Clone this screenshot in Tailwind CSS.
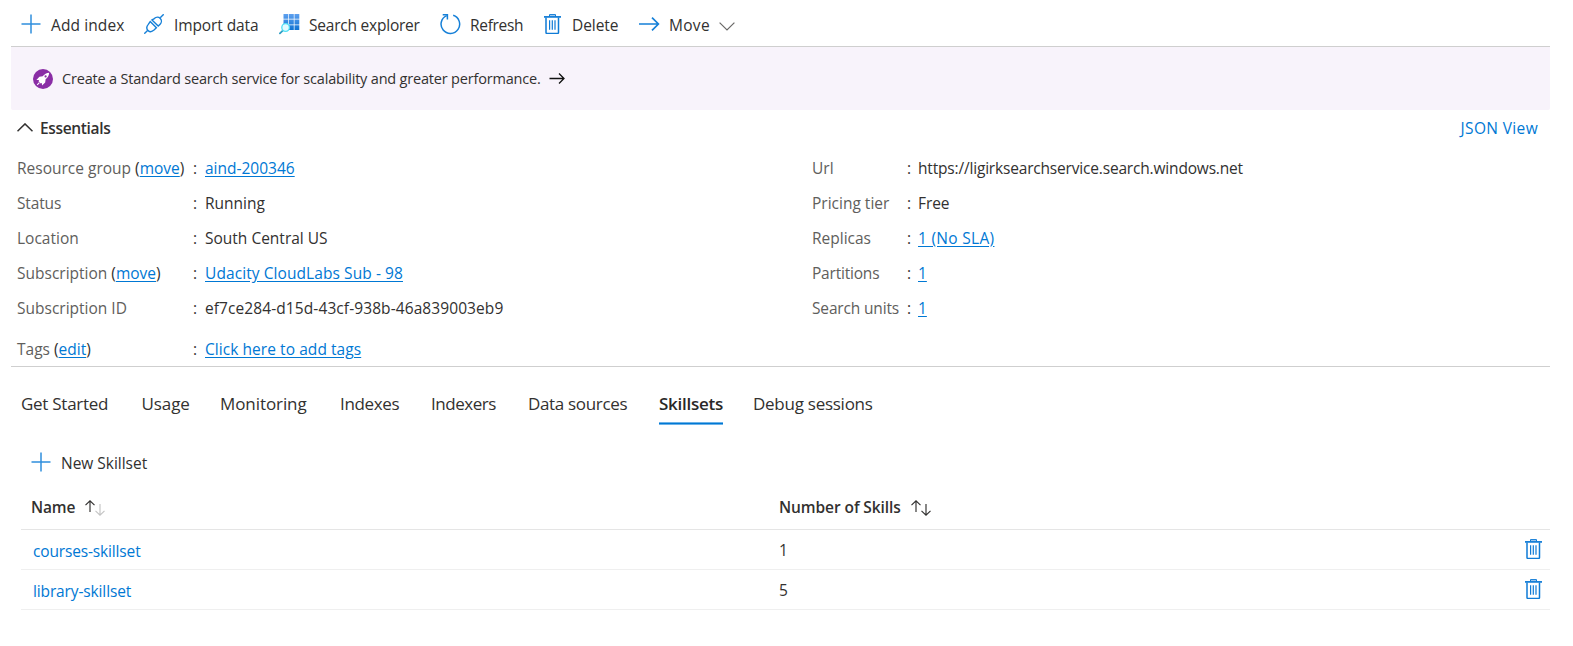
<!DOCTYPE html>
<html lang="en">
<head>
<meta charset="utf-8">
<title>Search service</title>
<script src="https://cdn.jsdelivr.net/npm/@tailwindcss/browser@4"></script>
</head>
<body class="bg-white">
<svg width="0" height="0" class="hidden">
  <symbol id="plus" viewBox="0 0 20 20"><path d="M10 .5v19M.5 10h19" fill="none" stroke="#2f8fdd" stroke-width="1.5"/></symbol>
  <symbol id="trash" viewBox="0 0 17 20"><g fill="none" stroke="#0f7bd6"><path d="M5.5 2.5V.6h6v1.9" fill="#a9cdef" stroke-width="1"/><path d="M0 2.9h17" stroke-width="1.7"/><path d="M2 3.5v15q0 .9.9.9h10.7q.9 0 .9-.9v-15" stroke-width="1.5"/><path d="M5.6 6.2v9.6M8.3 6.2v9.6M11 6.2v9.6" stroke-width="1.2"/></g></symbol>
  <symbol id="up" viewBox="0 0 10 12"><path d="M5 12V.8M.5 5.2 5 .8l4.500 4.400" fill="none" stroke="currentColor" stroke-width="1.150"/></symbol>
  <symbol id="down" viewBox="0 0 10 12"><path d="M5 0v11.200M.5 6.800 5 11.200l4.500-4.400" fill="none" stroke="currentColor" stroke-width="1.150"/></symbol>
</svg>
<div class="flex h-[646px] w-[1573px] flex-col overflow-hidden pl-[11px] pr-[23px] font-['Open_Sans',sans-serif] text-[15.5px] text-[#323130] whitespace-nowrap">

  <!-- Command bar -->
  <div class="flex h-[47px] shrink-0 items-center border-b border-[#cfcfcf] pt-[5px] pl-[10px]">
    <div class="flex w-[123px] items-center gap-[10px]">
      <svg class="mb-[3px] size-5"><use href="#plus"/></svg><span class="tracking-[0.1px]">Add index</span>
    </div>
    <div class="flex w-[135px] items-center gap-[10px]">
      <svg class="mb-[3px] size-5" viewBox="0 0 20 20" fill="none" stroke="#1680d8" stroke-width="1.400"><path d="M.3 19.700 3.800 16.200M16.200 3.800 19.700.3"/><path d="m6.200 7.600 6.200 6.200-2.400 2.300c-2 1.800-4.500 1.900-6 .3s-1.500-4 .3-6z"/><path d="m8 6 6.200 6.100 1.700-1.700c1.900-1.900 1.900-4.500.4-6s-4.200-1.600-6 .2z"/></svg><span class="tracking-[-0.1px]">Import data</span>
    </div>
    <div class="flex w-[161px] items-center gap-[9px]">
      <svg class="mb-[3px] size-[21px]" viewBox="0 0 21 21">
        <defs><linearGradient id="g" x1="0" y1="0" x2="0" y2="16" gradientUnits="userSpaceOnUse"><stop offset="0" stop-color="#5ea0ef"/><stop offset="1" stop-color="#0f73d2"/></linearGradient></defs>
        <path d="M4.500 0h4.800v4.800H4.500zM10 0h4.800v4.800H10zM15.500 0h4.800v4.800h-4.800zM4.500 5.600h4.800v4.800H4.500zM10 5.600h4.800v4.800H10zM15.500 5.600h4.800v4.800h-4.800zM4.500 11.200h4.800V16H4.500zM10 11.200h4.800V16H10zM15.500 11.200h4.800V16h-4.800z" fill="url(#g)"/>
        <path d="m4 16.300-3.100 3" stroke="#2f9fc4" stroke-width="1.800" stroke-linecap="round"/>
        <circle cx="6.600" cy="13.500" r="3.800" fill="#e3fbff" stroke="#50dff5" stroke-width="1.300"/>
      </svg><span class="tracking-[-0.22px]">Search explorer</span>
    </div>
    <div class="flex w-[104px] items-center gap-[9px]">
      <svg class="mb-[3px] size-[21px]" viewBox="0 0 21 21" fill="none" stroke="#1680d8" stroke-width="1.500"><path d="M13.200 1.300a9.300 9.300 0 1 1-6.500.3"/><path d="M2.700 .8h4.700v4.600"/></svg><span class="tracking-[-0.3px]">Refresh</span>
    </div>
    <div class="flex w-[95px] items-center gap-[11px]">
      <svg class="mb-[3px] h-5 w-[17px]"><use href="#trash"/></svg><span class="tracking-[-0.05px]">Delete</span>
    </div>
    <div class="flex items-center">
      <svg class="mb-[3px] h-[14px] w-[21px]" viewBox="0 0 21 14" fill="none" stroke="#1680d8" stroke-width="1.700"><path d="M0 7h19.500M13 .7 19.400 7 13 13.300"/></svg><span class="ml-[9px] tracking-[0.3px]">Move</span>
      <svg class="ml-[9px] mt-[1px] h-[9px] w-[16px]" viewBox="0 0 16 9" fill="none" stroke="#6a6968" stroke-width="1.200"><path d="m.6.600 7.400 7.400L15.400.6"/></svg>
    </div>
  </div>

  <!-- Upgrade banner -->
  <div class="flex h-[63px] shrink-0 items-center rounded-b-xs bg-[#f8f3fb] pl-[22px]">
    <svg class="mt-px size-5" viewBox="0 0 20 20"><circle cx="10" cy="10" r="10" fill="#8a2da5"/><path d="M16.200 3.800c-2.600.2-4.900 1.500-6.500 3.500l-3.300.4-3 3.300 2.700.1-.6 1.200 2.200 2.200 1.200-.6.100 2.700 3.200-3 .4-3.300c2.100-1.600 3.400-3.900 3.600-6.500z" fill="#fff"/><circle cx="12.600" cy="7.400" r="1.100" fill="#8a2da5"/><path d="m4.200 15.900 2.200-2.200" stroke="#fff" stroke-width="1.100"/></svg>
    <span class="ml-[9px] w-[487px] text-[14.5px] tracking-[-0.19px]">Create a Standard search service for scalability and greater performance.</span>
    <svg class="h-[11px] w-[16px]" viewBox="0 0 16 11" fill="none" stroke="#111" stroke-width="1.300"><path d="M.5 5.500h14.500M10 .5l5 5-5 5"/></svg>
  </div>

  <!-- Essentials -->
  <div class="flex h-[41px] shrink-0 items-center justify-between pb-[3px] pl-[6px] pr-[12px]">
    <div class="flex items-center gap-[7px]">
      <svg class="mb-[3px] h-[9px] w-[16px]" viewBox="0 0 16 9" fill="none" stroke="#323130" stroke-width="1.500"><path d="M.5 8.300 8 .9l7.500 7.400"/></svg>
      <span class="font-semibold tracking-[-0.35px]">Essentials</span>
    </div>
    <a class="tracking-[0.35px] text-[#0078d4]">JSON View</a>
  </div>
  <div class="flex h-[216px] shrink-0 border-b border-[#cfcfcf] pl-[6px] [&_a]:text-[#0078d4] [&_a]:underline [&_a]:underline-offset-2">
    <div class="grid w-[795px] auto-rows-[35px] grid-cols-[176px_12px_1fr] content-start items-center text-[#323130]">
      <div><span class="text-[#605e5c]">Resource group </span>(<a>move</a>)</div><div>:</div><div><a>aind-200346</a></div>
      <div class="tracking-[-0.15px] text-[#605e5c]">Status</div><div>:</div><div>Running</div>
      <div class="text-[#605e5c]">Location</div><div>:</div><div>South Central US</div>
      <div><span class="text-[#605e5c]">Subscription </span>(<a>move</a>)</div><div>:</div><div><a class="tracking-[0.08px]">Udacity CloudLabs Sub - 98</a></div>
      <div class="text-[#605e5c]">Subscription ID</div><div>:</div><div class="tracking-[0.09px]">ef7ce284-d15d-43cf-938b-46a839003eb9</div>
      <div class="pt-[12px]"><span class="text-[#605e5c]">Tags </span>(<a>edit</a>)</div><div class="pt-[12px]">:</div><div class="pt-[12px]"><a class="tracking-[0.06px]">Click here to add tags</a></div>
    </div>
    <div class="grid auto-rows-[35px] grid-cols-[95px_11px_1fr] content-start items-center">
      <div class="text-[#605e5c]">Url</div><div>:</div><div class="tracking-[-0.18px]">https://ligirksearchservice.search.windows.net</div>
      <div class="text-[#605e5c]">Pricing tier</div><div>:</div><div class="tracking-[-0.1px]">Free</div>
      <div class="text-[#605e5c]">Replicas</div><div>:</div><div><a class="tracking-[0.3px]">1 (No SLA)</a></div>
      <div class="tracking-[-0.2px] text-[#605e5c]">Partitions</div><div>:</div><div><a>1</a></div>
      <div class="tracking-[-0.16px] text-[#605e5c]">Search units</div><div>:</div><div><a>1</a></div>
    </div>
  </div>

  <!-- Tabs -->
  <div class="flex h-[58px] shrink-0 pl-[10px] text-[17px] leading-[37px] pt-[18px]">
    <div class="w-[120.5px] tracking-[-0.27px]">Get Started</div>
    <div class="w-[78.5px] tracking-[-0.1px]">Usage</div>
    <div class="w-[120px] tracking-[-0.08px]">Monitoring</div>
    <div class="w-[91px] tracking-[-0.35px]">Indexes</div>
    <div class="w-[97px] tracking-[-0.45px]">Indexers</div>
    <div class="w-[131px] tracking-[-0.33px]">Data sources</div>
    <div class="flex h-[40px] w-[64px] flex-col justify-between font-semibold tracking-[-0.26px] text-[#292827]"><span>Skillsets</span><div class="h-[3px] shrink-0 border-y border-[#6cb2e8] bg-[#0078d4]"></div></div>
    <div class="ml-[30px] tracking-[-0.26px]">Debug sessions</div>
  </div>

  <div class="flex h-[59px] shrink-0 items-center gap-[10px] pl-[20px] pt-[19px]">
    <svg class="mb-[4px] size-5"><use href="#plus"/></svg><span class="tracking-[-0.02px]">New Skillset</span>
  </div>

  <!-- Skillset table -->
  <div class="ml-[10px] flex flex-col">
    <div class="flex h-[46px] items-center border-b border-[#e5e5e5] pl-[10px] pt-[2px] font-semibold">
      <div class="flex w-[748px] items-center"><span class="pt-px tracking-[-0.15px]">Name</span><svg class="ml-[10px] mb-[3px] h-[12px] w-[10px]"><use href="#up"/></svg><svg class="mt-[5px] h-[12px] w-[10px] text-[#c4c4c4]"><use href="#down"/></svg></div>
      <div class="flex items-center"><span class="pt-px tracking-[-0.08px]">Number of Skills</span><svg class="ml-[10px] mb-[3px] h-[12px] w-[10px]"><use href="#up"/></svg><svg class="mt-[5px] h-[12px] w-[10px]"><use href="#down"/></svg></div>
    </div>
    <div class="flex h-[40px] items-center border-b border-[#efefef] pl-[12px] pr-[8px]">
      <a class="w-[746px] pt-[5px] tracking-[-0.15px] text-[#0078d4]">courses-skillset</a><span class="grow pt-[3px]">1</span><svg class="mb-[1px] h-5 w-[17px]"><use href="#trash"/></svg>
    </div>
    <div class="flex h-[40px] items-center border-b border-[#efefef] pl-[12px] pr-[8px]">
      <a class="w-[746px] pt-[5px] tracking-[-0.13px] text-[#0078d4]">library-skillset</a><span class="grow pt-[3px]">5</span><svg class="mb-[1px] h-5 w-[17px]"><use href="#trash"/></svg>
    </div>
  </div>
</div>
</body>
</html>
